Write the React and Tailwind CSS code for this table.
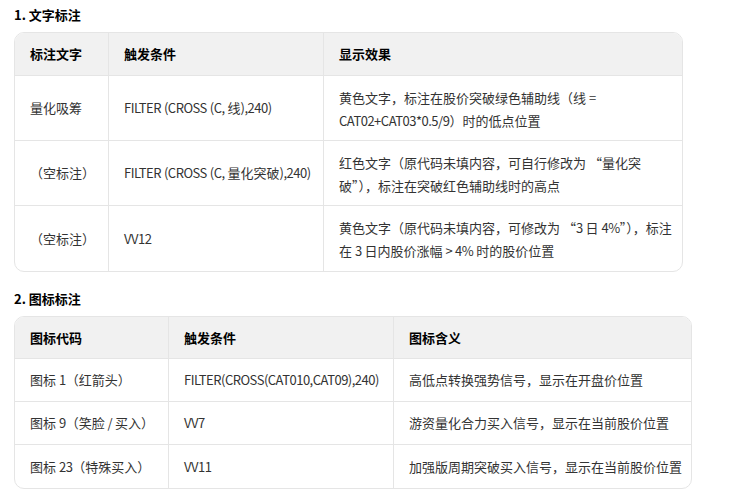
const font = { fontFamily: '"Noto Sans CJK SC", sans-serif' };

const textRows = [
  ["量化吸筹", "FILTER (CROSS (C, 线),240)", ["黄色文字，标注在股价突破绿色辅助线（线 =", "CAT02+CAT03*0.5/9）时的低点位置"]],
  ["（空标注）", "FILTER (CROSS (C, 量化突破),240)", ["红色文字（原代码未填内容，可自行修改为 “量化突", "破”），标注在突破红色辅助线时的高点"]],
  ["（空标注）", "VV12", ["黄色文字（原代码未填内容，可修改为 “3 日 4%”），标注", "在 3 日内股价涨幅 > 4% 时的股价位置"]],
];

const iconRows = [
  ["图标 1（红箭头）", "FILTER(CROSS(CAT010,CAT09),240)", "高低点转换强势信号，显示在开盘价位置"],
  ["图标 9（笑脸 / 买入）", "VV7", "游资量化合力买入信号，显示在当前股价位置"],
  ["图标 23（特殊买入）", "VV11", "加强版周期突破买入信号，显示在当前股价位置"],
];

// latin runs in the reference font are narrower than Noto's, tighten them
function T({ s }) {
  const parts = s.split(/([\x21-\x7e]+)/);
  return parts.map((p, i) =>
    i % 2 === 1 ? (
      <span key={i} className="tracking-[-0.5px]">
        {p}
      </span>
    ) : (
      p
    )
  );
}

function Heading({ children }) {
  return <h2 className="text-[13px] font-bold text-black leading-[20px] pl-[14px]">{children}</h2>;
}

export default function App() {
  return (
    <div className="w-[738px] h-[499px] bg-white text-[#333] text-[13px]" style={font}>
      <div className="pt-[5px]">
        <Heading>1. 文字标注</Heading>
      </div>

      {/* table 1 */}
      <div className="ml-[14px] mt-[7px] w-[669px] border border-[#e5e5e5] rounded-[10px] overflow-hidden">
        <div className="grid grid-cols-[94px_215px_1fr] bg-[#f1f1f1] h-[43px] border-b border-[#e5e5e5] font-bold text-black">
          <div className="flex items-center pl-[15px] border-r border-[#e5e5e5]">标注文字</div>
          <div className="flex items-center pl-[15px] border-r border-[#e5e5e5]">触发条件</div>
          <div className="flex items-center pl-[15px]">显示效果</div>
        </div>
        {textRows.map((r, i) => (
          <div
            key={i}
            className={`grid grid-cols-[94px_215px_1fr] h-[65px] ${i < textRows.length - 1 ? "border-b border-[#e5e5e5]" : ""}`}
          >
            <div className="flex items-center pl-[15px] border-r border-[#e5e5e5] whitespace-nowrap">{r[0]}</div>
            <div className="flex items-center pl-[15px] border-r border-[#e5e5e5] whitespace-nowrap">
              <span><T s={r[1]} /></span>
            </div>
            <div className="flex flex-col justify-center pl-[15px] leading-[23px] pt-[1px] whitespace-nowrap">
              {r[2].map((l, j) => (
                <div key={j}><T s={l} /></div>
              ))}
            </div>
          </div>
        ))}
      </div>

      <div className="mt-[17px]">
        <Heading>2. 图标标注</Heading>
      </div>

      {/* table 2 */}
      <div className="ml-[14px] mt-[7px] w-[678px] border border-[#e5e5e5] rounded-[10px] overflow-hidden">
        <div className="grid grid-cols-[154px_225px_1fr] bg-[#f1f1f1] h-[42px] border-b border-[#e5e5e5] font-bold text-black">
          <div className="flex items-center pl-[15px] border-r border-[#e5e5e5]">图标代码</div>
          <div className="flex items-center pl-[15px] border-r border-[#e5e5e5]">触发条件</div>
          <div className="flex items-center pl-[15px]">图标含义</div>
        </div>
        {iconRows.map((r, i) => (
          <div
            key={i}
            className={`grid grid-cols-[154px_225px_1fr] h-[43px] ${i < iconRows.length - 1 ? "border-b border-[#e5e5e5]" : ""}`}
          >
            <div className="flex items-center pl-[15px] border-r border-[#e5e5e5] whitespace-nowrap">
              <span><T s={r[0]} /></span>
            </div>
            <div className="flex items-center pl-[15px] border-r border-[#e5e5e5] whitespace-nowrap">
              <span><T s={r[1]} /></span>
            </div>
            <div className="flex items-center pl-[15px] whitespace-nowrap">{r[2]}</div>
          </div>
        ))}
      </div>
    </div>
  );
}
